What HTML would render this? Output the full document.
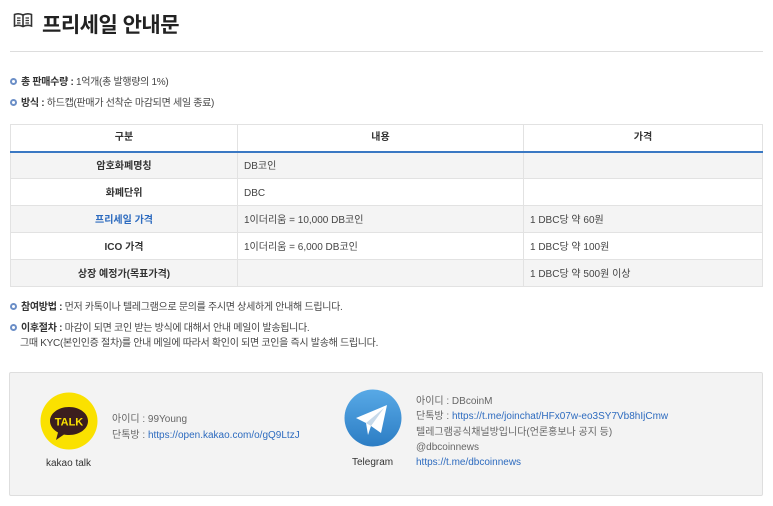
<!DOCTYPE html>
<html><head><meta charset="utf-8">
<style>
*{margin:0;padding:0;box-sizing:border-box}
body{width:773px;height:506px;background:#fff;font-family:"Liberation Sans","Noto Sans CJK KR",sans-serif;color:#444;position:relative;overflow:hidden;font-size:10px}
.abs{position:absolute;white-space:nowrap}
h1{position:absolute;left:42px;top:9px;font-size:21px;font-weight:bold;color:#222;letter-spacing:-0.5px}
.hr{position:absolute;left:10px;top:51px;width:753px;height:1px;background:#ddd}
.bul{display:inline-block;width:7px;height:7px;border:2px solid #6c8fc7;border-radius:50%;margin-right:4px;vertical-align:0px}
.li{position:absolute;left:10px;font-size:10px;line-height:12px;color:#444;white-space:nowrap;letter-spacing:-0.3px}
.li b{color:#333}
table{position:absolute;left:10px;top:124px;width:753px;border-collapse:collapse;font-size:10px}
td,th{border:1px solid #e2e2e2;height:27px;padding:0 6px;line-height:12px;vertical-align:middle}
td{padding-top:3px}
th{font-weight:bold;color:#333;background:#fff;height:27px}
tr.h th{border-bottom:2px solid #3a78c3}
td.c{text-align:center;font-weight:bold;color:#333}
tr.g td{background:#f4f4f4}
.blue{color:#2d6bbf!important}
.box{position:absolute;left:9px;top:372px;width:754px;height:124px;background:#f3f3f3;border:1px solid #dedede;border-radius:2px}
.t{position:absolute;font-size:10px;line-height:12px;color:#666;white-space:nowrap}
a{color:#2d6bbf;text-decoration:none}
</style></head><body>
<svg class="abs" style="left:13px;top:12px" width="20" height="16" viewBox="0 0 20 16">
<path d="M10 3 C7 1.5 4 1.5 1.5 2.5 V14 C4 13 7 13 10 14.5 C13 13 16 13 18.5 14 V2.5 C16 1.5 13 1.5 10 3 Z M10 3 V14.5" fill="none" stroke="#333" stroke-width="1.6"/>
<path d="M4 6h3.5M4 8.5h3.5M4 11h3.5M12.5 6h3.5M12.5 8.5h3.5M12.5 11h3.5" stroke="#333" stroke-width="1.2"/>
</svg>
<h1>프리세일 안내문</h1>
<div class="hr"></div>
<div class="li" style="top:77px"><span class="bul"></span><b>총 판매수량 :</b> 1억개(총 발행량의 1%)</div>
<div class="li" style="top:98px"><span class="bul"></span><b>방식 :</b> 하드캡(판매가 선착순 마감되면 세일 종료)</div>
<table>
<tr class="h"><th style="width:227px">구분</th><th style="width:286px">내용</th><th>가격</th></tr>
<tr class="g"><td class="c">암호화폐명칭</td><td>DB코인</td><td></td></tr>
<tr><td class="c">화폐단위</td><td>DBC</td><td></td></tr>
<tr class="g"><td class="c blue">프리세일 가격</td><td>1이더리움 = 10,000 DB코인</td><td>1 DBC당 약 60원</td></tr>
<tr><td class="c">ICO 가격</td><td>1이더리움 = 6,000 DB코인</td><td>1 DBC당 약 100원</td></tr>
<tr class="g"><td class="c">상장 예정가(목표가격)</td><td></td><td>1 DBC당 약 500원 이상</td></tr>
</table>
<div class="li" style="top:302px"><span class="bul"></span><b>참여방법 :</b> 먼저 카톡이나 텔레그램으로 문의를 주시면 상세하게 안내해 드립니다.</div>
<div class="li" style="top:323px"><span class="bul"></span><b>이후절차 :</b> 마감이 되면 코인 받는 방식에 대해서 안내 메일이 발송됩니다.</div>
<div class="li" style="top:338px;left:20px">그때 KYC(본인인증 절차)를 안내 메일에 따라서 확인이 되면 코인을 즉시 발송해 드립니다.</div>
<div class="box"></div>
<svg class="abs" style="left:40px;top:392px" width="58" height="58" viewBox="0 0 58 58">
<circle cx="29" cy="29" r="28.5" fill="#fae100"/>
<path d="M29 15 C18 15 10 21.5 10 29 C10 34 13.5 38 18 40.5 L16 48 L24 42.5 C25.5 42.8 27 43 29 43 C40 43 48 36.5 48 29 C48 21.5 40 15 29 15Z" fill="#3b1e1e"/>
<text x="29" y="33.5" text-anchor="middle" font-family="Liberation Sans" font-weight="bold" font-size="11" fill="#fae100">TALK</text>
</svg>
<div class="t" style="left:46px;top:458px;color:#333">kakao talk</div>
<div class="t" style="left:112px;top:414px">아이디 : 99Young</div>
<div class="t" style="left:112px;top:430px">단톡방 : <a>https://open.kakao.com/o/gQ9LtzJ</a></div>
<svg class="abs" style="left:344px;top:389px" width="58" height="58" viewBox="0 0 58 58">
<defs><linearGradient id="g" x1="0" y1="0" x2="0" y2="1"><stop offset="0" stop-color="#58a9e6"/><stop offset="1" stop-color="#2c7dc4"/></linearGradient></defs>
<circle cx="29" cy="29" r="28.5" fill="url(#g)"/>
<path d="M12 29 L43 16 L37 44 L27 37 L24 46 L22 34 Z" fill="#fff"/>
<path d="M22 34 L40 19 L27 37 Z" fill="#c8daea"/>
</svg>
<div class="t" style="left:352px;top:457px;color:#333">Telegram</div>
<div class="t" style="left:416px;top:396px">아이디 : DBcoinM</div>
<div class="t" style="left:416px;top:411px">단톡방 : <a>https://t.me/joinchat/HFx07w-eo3SY7Vb8hIjCmw</a></div>
<div class="t" style="left:416px;top:427px">텔레그램공식채널방입니다(언론홍보나 공지 등)</div>
<div class="t" style="left:416px;top:442px">@dbcoinnews</div>
<div class="t" style="left:416px;top:457px"><a>https://t.me/dbcoinnews</a></div>
</body></html>
